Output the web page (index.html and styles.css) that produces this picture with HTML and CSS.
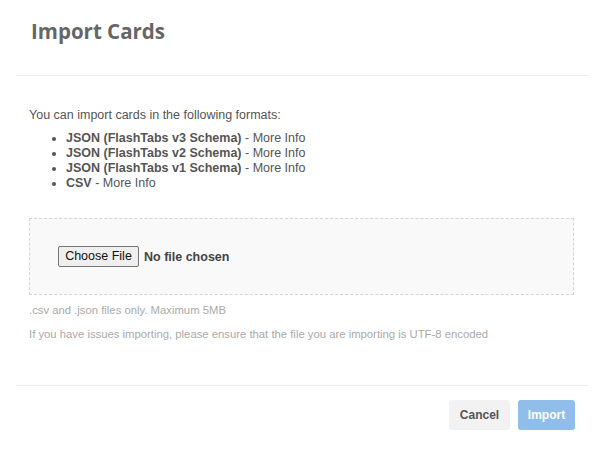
FILE: index.html
```html
<!DOCTYPE html>
<html>
<head>
<meta charset="utf-8">
<link rel="stylesheet" href="styles.css">
</head>
<body>
<div class="modal">
  <div class="modal-header">
    <h1 class="title">Import Cards</h1>
  </div>
  <div class="modal-body">
    <p class="intro">You can import cards in the following formats:</p>
    <ul class="formats">
      <li><b>JSON (FlashTabs v3 Schema)</b> - More Info</li>
      <li><b>JSON (FlashTabs v2 Schema)</b> - More Info</li>
      <li><b>JSON (FlashTabs v1 Schema)</b> - More Info</li>
      <li><b>CSV</b> - More Info</li>
    </ul>
    <div class="dropzone">
      <span class="file-btn">Choose File</span>
      <span class="file-name">No file chosen</span>
    </div>
    <p class="help">.csv and .json files only. Maximum 5MB</p>
    <p class="help help-2">If you have issues importing, please ensure that the file you are importing is UTF-8 encoded</p>
  </div>
  <div class="modal-footer">
    <button class="btn btn-cancel">Cancel</button>
    <button class="btn btn-import">Import</button>
  </div>
</div>
</body>
</html>
```
FILE: styles.css
```css
html, body {
  margin: 0;
  padding: 0;
  background: #ffffff;
}
body {
  font-family: "Liberation Sans", Arial, sans-serif;
  font-size: 12.5px;
  color: #555555;
}
.modal {
  width: 600px;
  padding: 0 12px 0 16px;
  box-sizing: border-box;
}
.modal-header {
  padding: 19px 15px 32px;
  border-bottom: 1px solid #ececec;
}
.title {
  margin: 0;
  font-family: "Open Sans", Lato, sans-serif;
  font-weight: 700;
  font-size: 20.5px;
  line-height: 24px;
  color: #666666;
}
.modal-body {
  padding: 32px 14px 0 13px;
}
.intro {
  margin: 0;
  line-height: 15px;
}
.formats {
  margin: 8px 0 0;
  padding-left: 37px;
  line-height: 15px;
}
.formats b {
  font-weight: 700;
}
.dropzone {
  margin-top: 27px;
  height: 75px;
  border: 1px dashed #d6d6d6;
  background: #f9f9f9;
  display: flex;
  align-items: center;
  padding-left: 28px;
  gap: 5px;
}
.file-btn {
  display: inline-block;
  box-sizing: border-box;
  width: 81px;
  text-align: center;
  height: 21px;
  line-height: 19px;
  border: 1px solid #767676;
  border-radius: 2px;
  background: #efefef;
  color: #111111;
  font-size: 12.5px;
}
.file-name {
  font-weight: 700;
  color: #444444;
}
.help {
  margin: 8px 0 0;
  line-height: 15px;
  font-size: 11.3px;
  color: #aaaaaa;
}
.help-2 {
  margin-top: 9px;
}
.modal-footer {
  margin-top: 43px;
  border-top: 1px solid #ececec;
  padding: 14px 13px 0 0;
  display: flex;
  justify-content: flex-end;
  gap: 8px;
}
.btn {
  font-family: "Liberation Sans", Arial, sans-serif;
  font-size: 12px;
  font-weight: 700;
  height: 30px;
  border: none;
  border-radius: 3px;
  padding: 0;
}
.btn-cancel {
  background: #f2f2f2;
  color: #555555;
  width: 61px;
}
.btn-import {
  background: #90bdea;
  color: #ffffff;
  width: 57px;
}
```
